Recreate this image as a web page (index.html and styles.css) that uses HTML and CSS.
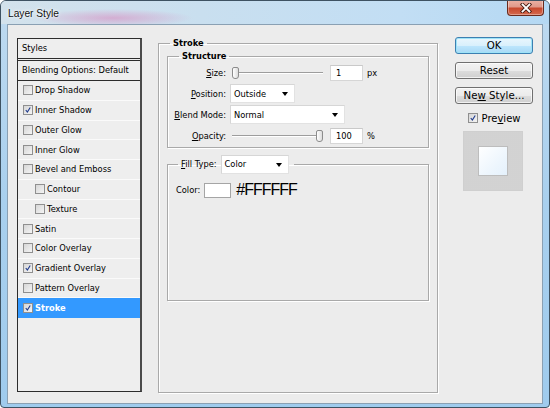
FILE: index.html
```html
<!DOCTYPE html>
<html>
<head>
<meta charset="utf-8">
<title>Layer Style</title>
<link rel="stylesheet" href="styles.css">
</head>
<body>
<div class="window">
  <div class="titlebar">
    <span class="title">Layer Style</span>
    <div class="close">
      <svg width="14" height="10" viewBox="0 0 14 10">
        <path d="M3.5 1.5 L10.5 8.5 M10.5 1.5 L3.5 8.5" stroke="#4a1c12" stroke-width="3.6" stroke-linecap="square" fill="none"/>
        <path d="M3.5 1.5 L10.5 8.5 M10.5 1.5 L3.5 8.5" stroke="#ffffff" stroke-width="1.8" stroke-linecap="square" fill="none"/>
      </svg>
    </div>
  </div>
  <div class="client">
    <div class="styles-list">
      <div class="list-head">Styles</div>
      <div class="list-blend">Blending Options: Default</div>
      <div class="item"><span class="cb"></span>Drop Shadow</div>
      <div class="item"><span class="cb on"><svg viewBox="0 0 10 10"><path d="M2.2 5 L4.2 7.6 L7.8 1.8" stroke="#1f3a8c" stroke-width="1.4" fill="none"/></svg></span>Inner Shadow</div>
      <div class="item"><span class="cb"></span>Outer Glow</div>
      <div class="item"><span class="cb"></span>Inner Glow</div>
      <div class="item"><span class="cb"></span>Bevel and Emboss</div>
      <div class="item sub"><span class="cb"></span>Contour</div>
      <div class="item sub"><span class="cb"></span>Texture</div>
      <div class="item"><span class="cb"></span>Satin</div>
      <div class="item"><span class="cb"></span>Color Overlay</div>
      <div class="item"><span class="cb on"><svg viewBox="0 0 10 10"><path d="M2.2 5 L4.2 7.6 L7.8 1.8" stroke="#1f3a8c" stroke-width="1.4" fill="none"/></svg></span>Gradient Overlay</div>
      <div class="item"><span class="cb"></span>Pattern Overlay</div>
      <div class="item active"><span class="cb on"><svg viewBox="0 0 10 10"><path d="M2.2 5 L4.2 7.6 L7.8 1.8" stroke="#1f3a8c" stroke-width="1.4" fill="none"/></svg></span>Stroke</div>
    </div>

    <fieldset class="group stroke">
      <legend>Stroke</legend>
      <fieldset class="group structure">
        <legend>Structure</legend>
        <div class="row">
          <span class="lbl"><u>S</u>ize:</span>
          <div class="slider start"><span class="thumb"></span></div>
          <span class="num">1</span>
          <span class="unit">px</span>
        </div>
        <div class="row">
          <span class="lbl"><u>P</u>osition:</span>
          <div class="select pos"><span>Outside</span><span class="arrow"></span></div>
        </div>
        <div class="row">
          <span class="lbl"><u>B</u>lend Mode:</span>
          <div class="select blend"><span>Normal</span><span class="arrow"></span></div>
        </div>
        <div class="row">
          <span class="lbl"><u>O</u>pacity:</span>
          <div class="slider end"><span class="thumb"></span></div>
          <span class="num">100</span>
          <span class="unit">%</span>
        </div>
      </fieldset>
      <fieldset class="group fill">
        <legend><span class="fill-lbl"><u>F</u>ill Type:</span><span class="select ftype"><span>Color</span><span class="arrow"></span></span></legend>
        <div class="color-row">
          <span class="color-lbl">Color:</span>
          <span class="swatch"></span>
          <span class="hex">#FFFFFF</span>
        </div>
      </fieldset>
    </fieldset>

    <div class="side">
      <div class="btn default">OK</div>
      <div class="btn">Reset</div>
      <div class="btn">Ne<u>w</u> Style...</div>
      <div class="preview-row"><span class="cb on"><svg viewBox="0 0 10 10"><path d="M2.2 5 L4.2 7.6 L7.8 1.8" stroke="#1f3a8c" stroke-width="1.4" fill="none"/></svg></span><span>Pre<u>v</u>iew</span></div>
      <div class="preview-box"><div class="preview-inner"></div></div>
    </div>
  </div>
</div>
</body>
</html>
```

FILE: styles.css
```css
html, body {
  margin: 0;
  padding: 0;
  background: #ffffff;
}
body {
  font-family: "DejaVu Sans", sans-serif;
  font-size: 8.3px;
  color: #000;
}
u { text-decoration: underline; text-underline-offset: 1px; }

.window {
  width: 550px;
  height: 408px;
  box-sizing: border-box;
  border: 1px solid #3e5262;
  border-radius: 6px 6px 4px 4px;
  background: linear-gradient(180deg, #cadff0 0px, #bcd9f0 24px, #a9d0ee 200px, #9fcbed 100%);
  display: flex;
  flex-direction: column;
  overflow: hidden;
}

.titlebar {
  height: 23px;
  flex: none;
  display: flex;
  justify-content: space-between;
  align-items: flex-start;
  padding-left: 7px;
  padding-right: 5px;
  background:
    radial-gradient(ellipse 80px 9px at 112px 17px, rgba(216,140,192,0.6), rgba(216,140,192,0.25) 60%, rgba(216,140,192,0) 100%),
    linear-gradient(90deg, #d3e2ec 0px, #c9dfef 200px, #c2def4 400px, #b4d8f3 550px);
}
.title {
  align-self: center;
  font-family: "Liberation Sans", sans-serif;
  font-size: 10.2px;
  line-height: 12px;
  margin-top: 2px;
  color: #111;
  text-shadow: 0 0 4px #fff, 0 0 2px #fff;
}
.close {
  width: 37px;
  height: 16px;
  box-sizing: border-box;
  margin-top: -1px;
  border: 1px solid #6a2a1c;
  border-top: none;
  border-radius: 0 0 4px 4px;
  background: linear-gradient(180deg, #ecb2a4 0%, #e0998a 45%, #c8492e 55%, #d56a4e 100%);
  box-shadow: inset 0 0 0 1px rgba(255,255,255,0.35);
  display: flex;
  align-items: center;
  justify-content: center;
}
.close svg { display: block; }

.client {
  flex: 1;
  margin: 0 6px 3px 6px;
  border: 1px solid #8aa0b3;
  background: #ececec;
  display: flex;
  align-items: flex-start;
  padding: 12px 0 0 9px;
}

/* Styles list */
.styles-list {
  width: 125px;
  height: 354px;
  box-sizing: border-box;
  margin-top: 1px;
  border: 1px solid #2c2c2c;
  border-right: 2px solid #4a4a4a;
  background: #eeeeee;
  flex: none;
}
.list-head {
  height: 20px;
  box-sizing: border-box;
  border-bottom: 1px solid #2c2c2c;
  padding-left: 4px;
  line-height: 18px;
}
.list-blend {
  margin-top: 1px;
  height: 21px;
  box-sizing: border-box;
  border-top: 1px solid #2c2c2c;
  border-bottom: 1px solid #2c2c2c;
  padding-left: 4px;
  line-height: 19px;
}
.item {
  height: 19.75px;
  box-sizing: border-box;
  border-bottom: 1px solid #fafafa;
  display: flex;
  align-items: center;
  padding-left: 5px;
  gap: 2px;
}
.item.sub { padding-left: 17px; }
.item.active {
  background: #3399ff;
  color: #fff;
  font-weight: bold;
  border-bottom-color: #3399ff;
}

.cb {
  width: 10px;
  height: 10px;
  box-sizing: border-box;
  border: 1px solid #8f8f8f;
  background: linear-gradient(135deg, #d6d6d6 0%, #f4f4f4 100%);
  flex: none;
  display: inline-flex;
}
.cb svg { width: 8px; height: 8px; display: block; }

/* Group boxes */
.group {
  margin: 0;
  padding: 0;
  border: 1px solid #a9a9a9;
  box-shadow: inset 1px 1px 0 #ffffff, 1px 1px 0 #ffffff;
  min-width: 0;
}
.group > legend {
  font-weight: bold;
  line-height: 12px;
  padding: 0 3px;
}
.stroke {
  width: 280px;
  height: 356px;
  box-sizing: border-box;
  margin-left: 16px;
  padding: 0 8px;
  flex: none;
}
.stroke > legend { margin-left: 3px; }

.structure {
  margin-top: 1px;
  padding: 0 0 1px 0;
}
.structure > legend { margin-left: 11px; }

.row {
  height: 21px;
  display: flex;
  align-items: center;
}
.lbl {
  width: 58px;
  text-align: right;
  margin-right: 4px;
  flex: none;
}
.slider {
  width: 91px;
  height: 12px;
  margin-left: 2px;
  display: flex;
  align-items: center;
  background:
    linear-gradient(#9d9d9d, #9d9d9d) 0 5px / 100% 1px no-repeat,
    linear-gradient(#ffffff, #ffffff) 0 6px / 100% 1px no-repeat;
}
.slider.start { justify-content: flex-start; }
.slider.end { justify-content: flex-end; }
.thumb {
  width: 7px;
  height: 12px;
  box-sizing: border-box;
  border: 1px solid #8c8c8c;
  border-radius: 2px 2px 3px 3px;
  background: linear-gradient(90deg, #ffffff, #dcdcdc);
}
.num {
  width: 33px;
  height: 16px;
  box-sizing: border-box;
  margin-left: 7px;
  background: #fff;
  border: 1px solid #d6d6d6;
  border-top-color: #c9c9c9;
  padding-left: 5px;
  line-height: 14px;
}
.unit { margin-left: 4px; }

.select {
  height: 19px;
  box-sizing: border-box;
  background: #fff;
  border: 1px solid #e2e2e2;
  border-top-color: #d6d6d6;
  border-left-color: #d6d6d6;
  display: flex;
  align-items: center;
  justify-content: space-between;
  padding: 0 6px 0 3px;
}
.select.pos { width: 65px; }
.select.blend { width: 115px; }
.arrow {
  width: 0;
  height: 0;
  border-left: 3.5px solid transparent;
  border-right: 3.5px solid transparent;
  border-top: 4px solid #000;
}

.fill {
  margin-top: 7px;
  height: 146px;
  box-sizing: border-box;
  padding: 0 8px;
}
.fill > legend {
  margin-left: 2px;
  padding: 0 5px 0 3px;
  font-weight: normal;
  line-height: 19px;
  display: flex;
  align-items: center;
}
.fill-lbl { margin-right: 4px; }
.select.ftype { width: 68px; display: inline-flex; }

.color-row {
  margin-top: 8px;
  height: 16px;
  display: flex;
  align-items: center;
}
.color-lbl { margin-right: 4px; }
.swatch {
  width: 27px;
  height: 15px;
  box-sizing: border-box;
  background: #fff;
  border: 1px solid #a5a5a5;
}
.hex {
  margin-left: 5px;
  font-family: "Liberation Sans", sans-serif;
  font-size: 16px;
  letter-spacing: -1px;
  line-height: 16px;
}

/* Side column */
.side {
  width: 78px;
  margin-left: 17px;
  display: flex;
  flex-direction: column;
  align-items: center;
  flex: none;
}
.btn {
  width: 78px;
  height: 17px;
  box-sizing: border-box;
  border: 1px solid #707070;
  border-radius: 3px;
  background: linear-gradient(180deg, #f2f2f2 0%, #ebebeb 50%, #dddddd 51%, #cfcfcf 100%);
  box-shadow: inset 0 0 0 1px rgba(255,255,255,0.7);
  font-size: 10.2px;
  line-height: 15px;
  text-align: center;
  margin-bottom: 8px;
}
.btn.default {
  border-color: #3c7fb1;
  background: linear-gradient(180deg, #eaf6fd 0%, #d9f0fc 50%, #bee6fd 51%, #a7d9f5 100%);
  box-shadow: inset 0 0 0 1px #9ee3f7;
}
.preview-row {
  height: 18px;
  margin-top: -3px;
  display: flex;
  align-items: center;
  gap: 4px;
  font-size: 10px;
}
.preview-box {
  margin-top: 4px;
  width: 60px;
  height: 60px;
  box-sizing: border-box;
  border: 1px solid #cfcfcf;
  background-color: #d7d7d7;
  background-image: radial-gradient(circle, #cbcbcb 0.6px, transparent 0.8px);
  background-size: 2px 2px;
  display: flex;
  align-items: center;
  justify-content: center;
  margin-left: -3px;
}
.preview-inner {
  width: 30px;
  height: 30px;
  box-sizing: border-box;
  border: 1px solid #bdbdbd;
  background: linear-gradient(135deg, #ffffff 0%, #eef6fd 60%, #e4f1fc 100%);
}
```
